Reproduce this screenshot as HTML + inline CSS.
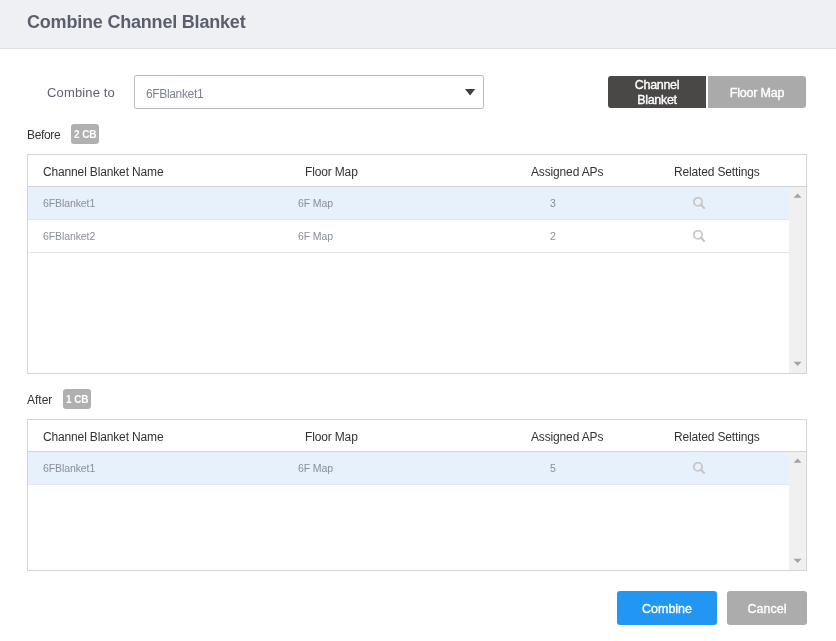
<!DOCTYPE html>
<html><head><meta charset="utf-8">
<style>
*{box-sizing:border-box;margin:0;padding:0}
html,body{width:836px;height:641px;overflow:hidden;background:#fff;font-family:"Liberation Sans",sans-serif}
#wrap{position:absolute;left:0;top:0;width:836px;height:641px;background:#fff;will-change:transform;overflow:hidden}
.a{position:absolute;white-space:nowrap}
#hdr{position:absolute;left:0;top:0;width:836px;height:49px;background:#eff0f4;border-bottom:1px solid #e0e1e5}
#title{left:27px;top:11px;font-size:18px;font-weight:bold;color:#5b5f6c;line-height:22px;letter-spacing:-0.2px}
#lblc{left:47px;top:85px;font-size:13px;color:#5f6370;line-height:16px;letter-spacing:0.15px}
#sel{position:absolute;left:134px;top:75px;width:350px;height:34px;border:1px solid #b9bcc0;border-radius:2px;background:#fff}
#selt{left:146px;top:87px;font-size:12px;color:#7e828e;line-height:14px;letter-spacing:-0.35px}
#tri{position:absolute;left:465px;top:89px;width:0;height:0;border-left:5px solid transparent;border-right:5px solid transparent;border-top:6px solid #3b3e46}
.tbtn{position:absolute;top:76px;height:32px;width:98px;color:#fff;font-weight:normal;text-align:center;-webkit-text-stroke:0.35px #fff}
#b1{left:608px;background:#4a4847;border-radius:3px 0 0 3px;font-size:12.5px;line-height:15px;padding-top:2px;letter-spacing:-0.3px}
#b2{left:708px;background:#aaaaaa;border-radius:0 3px 3px 0;font-size:12.5px;line-height:34px;letter-spacing:-0.2px}
.lbl{font-size:12px;color:#333;line-height:14px;letter-spacing:-0.35px}
.badge{position:absolute;height:20px;border-radius:3px;background:#b0b0b0;color:#fff;font-size:10px;font-weight:bold;line-height:21px;text-align:center;letter-spacing:-0.4px;word-spacing:0.8px;white-space:nowrap}
.tbl{position:absolute;left:27px;width:780px;border:1px solid #d2d4d8;background:#fff}
.th{position:absolute;left:0;top:0;width:778px;height:32px;border-bottom:1px solid #cfd2d6;background:#fff}
.hc{position:absolute;top:10px;font-size:12px;color:#333;line-height:14px;white-space:nowrap;letter-spacing:-0.15px}
.row{position:absolute;left:0;width:761px;height:33px;border-bottom:1px solid #e3e5e8}
.sel{background:#e7f1fb}
.bc{position:absolute;top:10px;font-size:10.5px;color:#8a8e98;line-height:12px;white-space:nowrap;letter-spacing:-0.1px}
.sb{position:absolute;right:0;width:17px;background:#f0f0f0}
.up{position:absolute;left:5px;width:0;height:0;border-left:3.5px solid transparent;border-right:3.5px solid transparent;border-bottom:4px solid #a3a3a3}
.dn{position:absolute;left:5px;width:0;height:0;border-left:3.5px solid transparent;border-right:3.5px solid transparent;border-top:4px solid #a3a3a3}
.srch{position:absolute;top:10px;left:665px}
.btn{position:absolute;top:591px;height:34px;border-radius:3px;color:#fff;font-weight:normal;font-size:12.5px;line-height:37px;text-align:center;-webkit-text-stroke:0.35px #fff}
</style></head><body>
<div id="wrap">
<div id="hdr"></div>
<div class="a" id="title">Combine Channel Blanket</div>

<div class="a" id="lblc">Combine to</div>
<div id="sel"></div>
<div class="a" id="selt">6FBlanket1</div>
<svg style="position:absolute;left:463px;top:87px" width="14" height="10" viewBox="0 0 14 10"><polygon points="2,2 12.2,2 7.1,8.4" fill="#3b3e46"/></svg>

<div class="tbtn" id="b1">Channel<br>Blanket</div>
<div class="tbtn" id="b2">Floor Map</div>

<!-- Before -->
<div class="a lbl" style="left:27px;top:128px">Before</div>
<div class="badge" style="left:71px;top:124px;width:28px">2 CB</div>

<div class="tbl" style="top:154px;height:220px">
  <div class="th">
    <div class="hc" style="left:15px">Channel Blanket Name</div>
    <div class="hc" style="left:277px">Floor Map</div>
    <div class="hc" style="left:503px">Assigned APs</div>
    <div class="hc" style="left:646px">Related Settings</div>
  </div>
  <div class="row sel" style="top:32px">
    <div class="bc" style="left:15px">6FBlanket1</div>
    <div class="bc" style="left:270px">6F Map</div>
    <div class="bc" style="left:522px">3</div>
    <svg class="srch" width="14" height="14" viewBox="0 0 14 14"><circle cx="4.95" cy="4.8" r="4.15" fill="none" stroke="#c6c6c6" stroke-width="1.7"/><line x1="7.8" y1="7.6" x2="11.1" y2="10.9" stroke="#c6c6c6" stroke-width="2.1" stroke-linecap="round"/></svg>
  </div>
  <div class="row" style="top:65px">
    <div class="bc" style="left:15px">6FBlanket2</div>
    <div class="bc" style="left:270px">6F Map</div>
    <div class="bc" style="left:522px">2</div>
    <svg class="srch" width="14" height="14" viewBox="0 0 14 14"><circle cx="4.95" cy="4.8" r="4.15" fill="none" stroke="#c6c6c6" stroke-width="1.7"/><line x1="7.8" y1="7.6" x2="11.1" y2="10.9" stroke="#c6c6c6" stroke-width="2.1" stroke-linecap="round"/></svg>
  </div>
  <div class="sb" style="top:32px;height:186px">
    <svg style="position:absolute;left:0;top:0" width="17" height="14"><polygon points="4.6,10.7 12.6,10.7 8.6,6.6" fill="#a3a3a3"/></svg>
    <svg style="position:absolute;left:0;top:173px" width="17" height="10"><polygon points="4.6,1.8 12.6,1.8 8.6,5.9" fill="#a3a3a3"/></svg>
  </div>
</div>

<!-- After -->
<div class="a lbl" style="left:27px;top:393px;letter-spacing:0">After</div>
<div class="badge" style="left:63px;top:389px;width:28px">1 CB</div>

<div class="tbl" style="top:419px;height:152px">
  <div class="th">
    <div class="hc" style="left:15px">Channel Blanket Name</div>
    <div class="hc" style="left:277px">Floor Map</div>
    <div class="hc" style="left:503px">Assigned APs</div>
    <div class="hc" style="left:646px">Related Settings</div>
  </div>
  <div class="row sel" style="top:32px">
    <div class="bc" style="left:15px">6FBlanket1</div>
    <div class="bc" style="left:270px">6F Map</div>
    <div class="bc" style="left:522px">5</div>
    <svg class="srch" width="14" height="14" viewBox="0 0 14 14"><circle cx="4.95" cy="4.8" r="4.15" fill="none" stroke="#c6c6c6" stroke-width="1.7"/><line x1="7.8" y1="7.6" x2="11.1" y2="10.9" stroke="#c6c6c6" stroke-width="2.1" stroke-linecap="round"/></svg>
  </div>
  <div class="sb" style="top:32px;height:118px">
    <svg style="position:absolute;left:0;top:0" width="17" height="14"><polygon points="4.6,10.7 12.6,10.7 8.6,6.6" fill="#a3a3a3"/></svg>
    <svg style="position:absolute;left:0;top:105px" width="17" height="10"><polygon points="4.6,1.8 12.6,1.8 8.6,5.9" fill="#a3a3a3"/></svg>
  </div>
</div>

<div class="btn" style="left:617px;width:100px;background:#2196f3">Combine</div>
<div class="btn" style="left:727px;width:80px;background:#acacac">Cancel</div>
</div>
</body></html>
